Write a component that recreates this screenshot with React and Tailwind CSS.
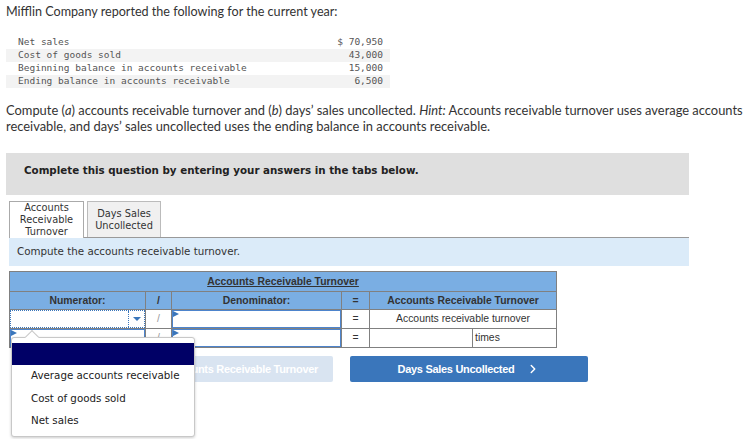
import { ChevronLeft, ChevronRight } from 'lucide-react'

const data = [
  ['Net sales', '$ 70,950'],
  ['Cost of goods sold', '43,000'],
  ['Beginning balance in accounts receivable', '15,000'],
  ['Ending balance in accounts receivable', '6,500'],
]

function Flag() {
  return (
    <span className="absolute left-0 top-0 w-0 h-0 border-t-[3px] border-b-[3px] border-l-[6px] border-t-transparent border-b-transparent border-l-[#3a76bb]" />
  )
}

function InputBox() {
  return (
    <div className="relative h-full border-[1.5px] border-[#4d84cc] bg-white">
      <Flag />
    </div>
  )
}

function App() {
  return (
    <div className="relative w-[753px] h-[439px] overflow-hidden bg-white text-[#333] font-['Lato',sans-serif]">
      <p className="pl-[6px] pt-[4px] text-[12.6px] leading-[16px] text-[#333]">
        Mifflin Company reported the following for the current year:
      </p>

      {/* given data */}
      <div className="ml-[6px] mt-[16px] w-[384px] font-['DejaVu_Sans_Mono',monospace] text-[9.5px] text-[#555]">
        {data.map(([label, amount], i) => (
          <div key={label} className={`flex h-[13px] items-center pl-[12px] pr-[7px] ${i % 2 ? 'bg-[#f3f3f3]' : ''}`}>
            <span className="flex-1">{label}</span>
            <span>{amount}</span>
          </div>
        ))}
      </div>

      <p className="pl-[6px] mt-[14px] text-[12.9px] leading-[16px] text-[#333] pr-[2px]">
        Compute (<i>a</i>) accounts receivable turnover and (<i>b</i>) days’ sales uncollected. <i>Hint:</i> Accounts receivable turnover uses average accounts receivable, and days’ sales uncollected uses the ending balance in accounts receivable.
      </p>

      <div className="ml-[6px] mt-[19px] w-[683px] h-[42px] bg-[#dfdfdf] pl-[18px] pt-[11px] font-['DejaVu_Sans',sans-serif] text-[10.3px] font-bold leading-[12px] text-[#222]">
        Complete this question by entering your answers in the tabs below.
      </div>

      {/* tabs */}
      <div className="ml-[9px] mt-[6px] w-[680px] flex items-end gap-[3px] border-b border-[#999] font-['DejaVu_Sans',sans-serif] text-[9.8px] leading-[12px] text-[#333]">
        <div className="w-[75px] h-[37px] -mb-px bg-white border border-b-0 border-[#aaa] flex items-center justify-center text-center">
          Accounts<br />Receivable<br />Turnover
        </div>
        <div className="w-[74px] h-[36px] bg-[#f0f0f0] border border-b-0 border-[#bbb] flex items-center justify-center text-center">
          Days Sales<br />Uncollected
        </div>
      </div>
      <div className="ml-[9px] w-[680px] h-[28px] bg-[#dbebf9] flex items-center pl-[8px] font-['DejaVu_Sans',sans-serif] text-[10.3px] text-[#333]">
        Compute the accounts receivable turnover.
      </div>

      {/* computation table */}
      <table className="ml-[9px] mt-[5px] w-[547px] border-collapse table-fixed font-['Liberation_Sans',sans-serif] text-[10.4px] text-[#333]">
        <colgroup>
          <col className="w-[136px]" />
          <col className="w-[26px]" />
          <col className="w-[170px]" />
          <col className="w-[28px]" />
          <col className="w-[103px]" />
          <col className="w-[84px]" />
        </colgroup>
        <tbody>
          <tr className="h-[20px] bg-[#7aaee3]">
            <td colSpan={6} className="border border-[#808080] text-center font-bold underline">
              Accounts Receivable Turnover
            </td>
          </tr>
          <tr className="h-[18px] bg-[#7aaee3] font-bold">
            <td className="border border-[#808080] text-center">Numerator:</td>
            <td className="border border-[#808080] text-center">/</td>
            <td className="border border-[#808080] text-center">Denominator:</td>
            <td className="border border-[#808080] text-center">=</td>
            <td colSpan={2} className="border border-[#808080] text-center">Accounts Receivable Turnover</td>
          </tr>
          <tr className="h-[19px]">
            <td className="border border-[#808080] p-0 h-[19px]">
              <div className="flex h-full border border-dotted border-[#3a76bb] bg-white">
                <div className="flex-1" />
                <div className="w-[16px] border-l border-dotted border-[#3a76bb] flex items-center justify-center">
                  <span className="w-0 h-0 border-l-[4px] border-r-[4px] border-t-[4px] border-l-transparent border-r-transparent border-t-[#3a76bb]" />
                </div>
              </div>
            </td>
            <td className="border border-[#808080] text-center text-[#999]">/</td>
            <td className="border border-[#808080] p-0 h-[19px]"><InputBox /></td>
            <td className="border border-[#808080] text-center">=</td>
            <td colSpan={2} className="border border-[#808080] text-center">Accounts receivable turnover</td>
          </tr>
          <tr className="h-[19px]">
            <td className="border border-[#808080] p-0 h-[19px]"><InputBox /></td>
            <td className="border border-[#808080] text-center text-[#999]">/</td>
            <td className="border border-[#808080] p-0 h-[19px]"><InputBox /></td>
            <td className="border border-[#808080] text-center">=</td>
            <td className="border border-[#808080]" />
            <td className="border border-[#808080] pl-[2px]">times</td>
          </tr>
        </tbody>
      </table>

      {/* nav buttons */}
      <div className="ml-[95px] mt-[8px] flex gap-[17px] font-['Liberation_Sans',sans-serif] text-[11px] font-bold tracking-[-0.3px] text-white">
        <button className="w-[238px] h-[26px] rounded-[2px] bg-[#d9e4f1] flex items-center justify-end gap-[12px] pr-[15px]">
          <ChevronLeft size={14} strokeWidth={2.5} />
          Accounts Receivable Turnover
        </button>
        <button className="w-[238px] h-[26px] rounded-[2px] bg-[#3a76bb] flex items-center justify-center gap-[12px]">
          Days Sales Uncollected
          <ChevronRight size={14} strokeWidth={2.5} />
        </button>
      </div>

      {/* open dropdown */}
      <div className="absolute left-[11px] top-[337px] w-[184px] h-[100px] bg-white border border-[#c8c8c8] rounded-[3px] shadow-[0_1px_3px_rgba(0,0,0,0.2)] pt-[5px] font-['DejaVu_Sans',sans-serif] text-[10.3px] text-[#222]">
        <span className="absolute left-[15px] -top-[6px] w-[10px] h-[10px] rotate-45 bg-white border-l border-t border-[#c8c8c8]" />
        <div className="relative h-[22px] bg-[#000066]" />
        <div className="h-[22px] pl-[19px] flex items-center">Average accounts receivable</div>
        <div className="h-[23px] pl-[19px] flex items-center">Cost of goods sold</div>
        <div className="h-[22px] pl-[19px] flex items-center">Net sales</div>
      </div>
    </div>
  )
}

export default App
